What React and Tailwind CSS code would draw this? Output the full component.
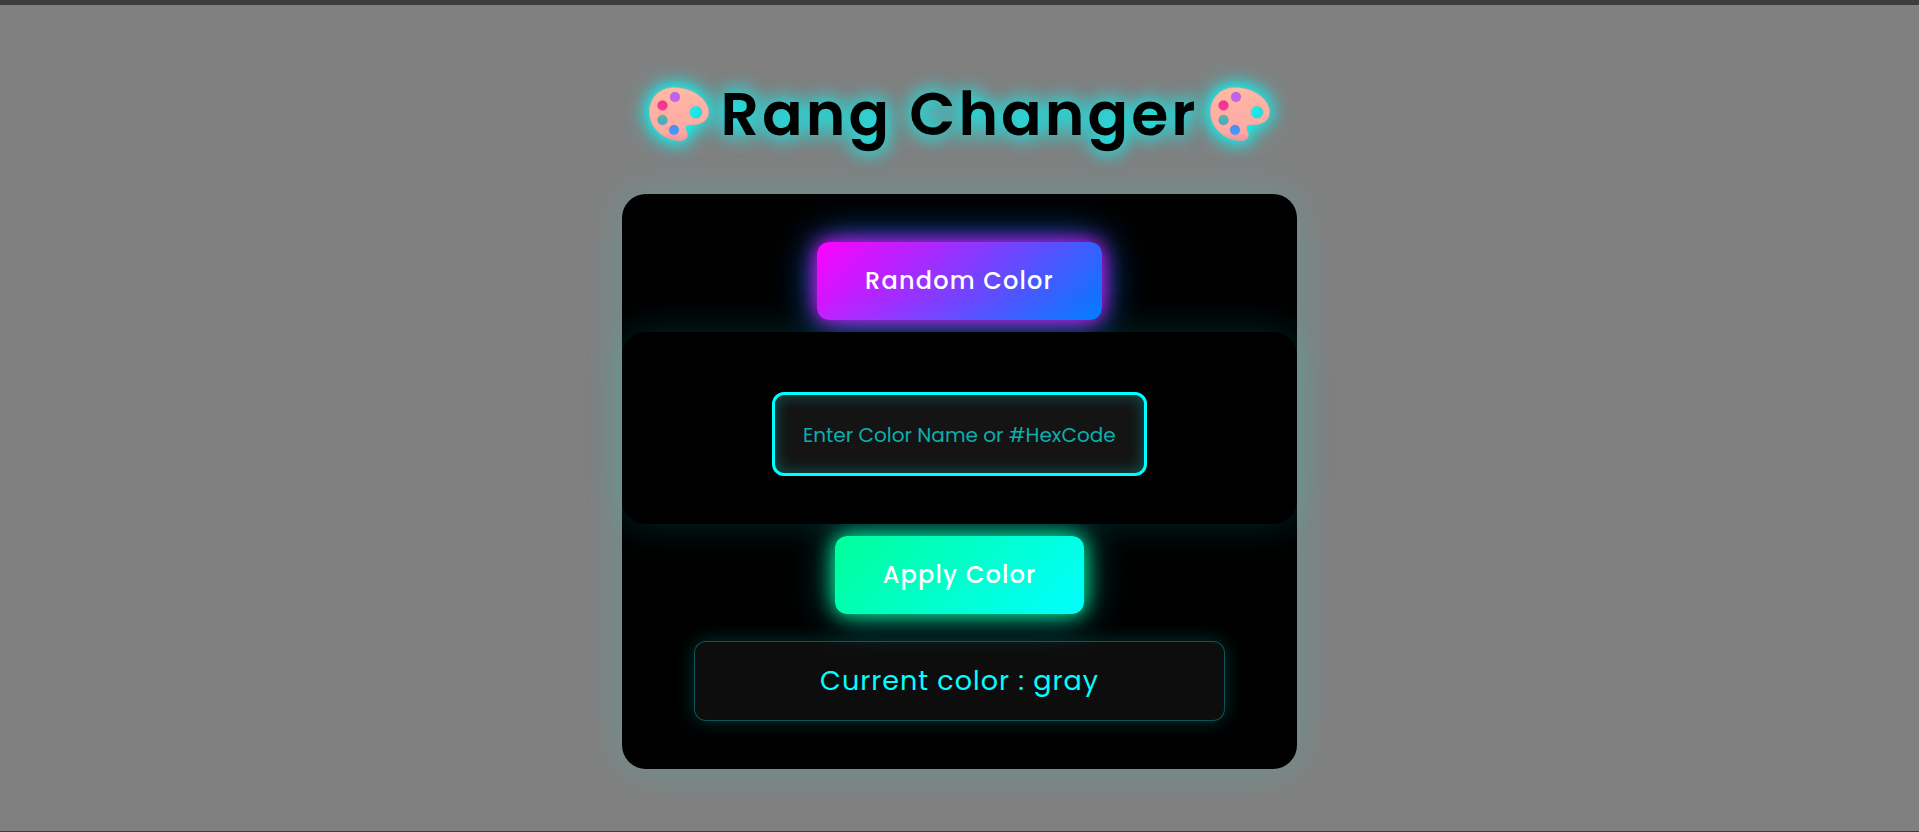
import { useState } from "react";

const DOTS = [
  { cx: 26, cy: 10, fill: "url(#dot-purple)" },
  { cx: 13.5, cy: 18.5, fill: "url(#dot-pink)" },
  { cx: 13.5, cy: 33, fill: "url(#dot-teal)" },
  { cx: 25, cy: 43, fill: "url(#dot-blue)" },
];

function PaletteDefs() {
  return (
    <svg className="absolute size-0" aria-hidden="true">
      <defs>
        <linearGradient id="board" x1="0" y1="0" x2="0" y2="1">
          <stop offset="0" stopColor="#ffbd9f" />
          <stop offset="0.15" stopColor="#ffb5a5" />
          <stop offset="0.85" stopColor="#ffaaa4" />
          <stop offset="1" stopColor="#f78fa0" />
        </linearGradient>
        <linearGradient id="dot-purple" x1="0" y1="0" x2="0" y2="1">
          <stop offset="0" stopColor="#b765ef" />
          <stop offset="1" stopColor="#ca60ee" />
        </linearGradient>
        <linearGradient id="dot-pink" x1="0" y1="0" x2="0" y2="1">
          <stop offset="0" stopColor="#f5308a" />
          <stop offset="1" stopColor="#ff3797" />
        </linearGradient>
        <linearGradient id="dot-teal" x1="0" y1="0" x2="0" y2="1">
          <stop offset="0" stopColor="#5bb9a2" />
          <stop offset="1" stopColor="#38adcb" />
        </linearGradient>
        <linearGradient id="dot-blue" x1="0" y1="0" x2="0" y2="1">
          <stop offset="0" stopColor="#4a8cf5" />
          <stop offset="1" stopColor="#409fff" />
        </linearGradient>
      </defs>
    </svg>
  );
}

function Palette() {
  return (
    <svg
      viewBox="0 0 60 54"
      className="h-[54px] w-[60px] shrink-0 overflow-visible [filter:drop-shadow(0_0_8px_#00ffff)_drop-shadow(0_0_10px_rgba(0,255,255,0.7))]"
      aria-hidden="true"
    >
      <path
        fill="url(#board)"
        stroke="#f4a08f"
        strokeWidth="0.6"
        fillRule="evenodd"
        d="M25 0.4C10.500 0.400 0.400 11 0.400 25C0.400 41 15 53.600 31 53.600C36 53.600 38.600 51 38.400 47.500C38.200 44.500 36.200 43 36.400 40.500C36.600 38.300 38.600 37.800 42 37.800C53 38 59.600 33 59.600 25C59.600 12 43 0.400 25 0.400ZM47 19A6.300 6.300 0 1 1 47 31.600A6.300 6.300 0 1 1 47 19Z"
      />
      {DOTS.map((dot) => (
        <circle key={dot.fill} r="5" cx={dot.cx} cy={dot.cy} fill={dot.fill} stroke="#a05a8a" strokeOpacity="0.35" strokeWidth="0.5" />
      ))}
    </svg>
  );
}

export default function App() {
  const [color, setColor] = useState("gray");
  const [draft, setDraft] = useState("");

  const randomize = () =>
    setColor("#" + Math.floor(Math.random() * 0xffffff).toString(16).padStart(6, "0"));

  const apply = () => {
    if (draft.trim()) setColor(draft.trim());
  };

  return (
    <div
      className="flex min-h-screen flex-col border-t-5 border-b border-t-[#3d3d3d] border-b-[#3f3b3f] font-['Poppins',Inter,sans-serif]"
      style={{ backgroundColor: color }}
    >
      <PaletteDefs />
      <main className="flex flex-1 flex-col items-center px-4 pt-16 pb-15">
        <h1 className="flex items-center gap-3 text-6xl leading-[90px] font-semibold tracking-wider whitespace-nowrap text-black">
          <Palette />
          <span className="[text-shadow:0_0_20px_#00ffff,0_0_20px_rgba(0,255,255,0.6)]">Rang Changer</span>
          <Palette />
        </h1>

        <section className="mt-[35px] flex w-full max-w-[675px] flex-col items-center rounded-3xl bg-black py-12 shadow-[0_0_40px_rgba(0,255,255,0.15)]">
          <button
            type="button"
            onClick={randomize}
            className="h-[78px] rounded-xl bg-[linear-gradient(135deg,#ff00ff,#007bff)] px-12 text-2xl font-medium tracking-wider text-white shadow-[0_0_20px_#ff00ff,0_0_40px_#007bff]"
          >
            Random Color
          </button>

          <div className="relative z-10 my-3 flex w-full justify-center rounded-3xl bg-black px-12 pt-15 pb-12 shadow-[0_0_40px_rgba(0,255,255,0.15)]">
            <input
              type="text"
              aria-label="Color name or hex code"
              placeholder="Enter Color Name or #HexCode"
              value={draft}
              onChange={(event) => setDraft(event.target.value)}
              className="h-[84px] w-full max-w-[375px] rounded-xl border-3 border-[#00ffff] bg-[#141414] px-7 pt-0.5 text-xl text-[#00ffff] shadow-[inset_0_0_15px_rgba(0,255,255,0.3)] outline-none placeholder:text-[#0caeae]"
            />
          </div>

          <button
            type="button"
            onClick={apply}
            className="h-[78px] rounded-xl bg-[linear-gradient(135deg,#00ff99,#00ffff)] px-12 text-2xl font-medium tracking-wider text-white shadow-[0_0_20px_#00ff99,0_0_40px_#00ffff80]"
          >
            Apply Color
          </button>

          <p className="mt-[27px] w-full max-w-[531px] rounded-xl border border-[#00ffff]/30 bg-white/5 px-6 py-5 text-center text-[27px] leading-[38px] tracking-[1px] text-[#00ffff] shadow-[0_0_20px_rgba(0,255,255,0.2)]">
            Current color : {color}
          </p>
        </section>
      </main>
    </div>
  );
}
